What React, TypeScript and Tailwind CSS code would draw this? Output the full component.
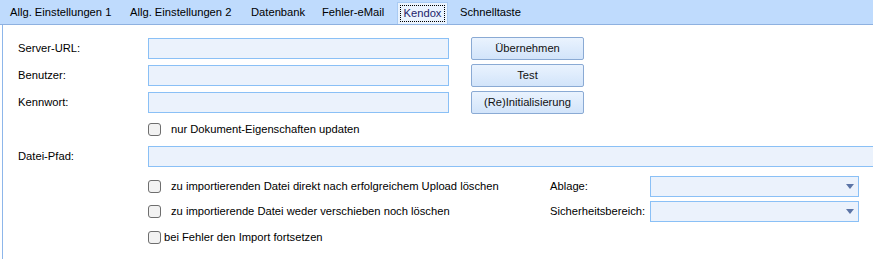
import React from "react";

const font = { fontFamily: '"Liberation Sans", Arial, sans-serif' };

function Tab({ label, w, active }: { label: string; w: number; active?: boolean }) {
  if (active) {
    return (
      <div className="h-[22px] mt-[2px] bg-[#eaf3fe] border border-b-0 border-[#a9cbf3] px-[2px] pt-[2px] box-border shrink-0" style={{ width: w }}>
        <div className="h-[17px] border border-dotted border-black flex items-center justify-center text-[#1d1d6b]">
          {label}
        </div>
      </div>
    );
  }
  return (
    <div className="h-[24px] flex items-center pl-[6px] shrink-0" style={{ width: w }}>
      {label}
    </div>
  );
}

function Input({ w }: { w: number }) {
  return <div className="h-[21px] bg-[#ebf2fc] border border-[#8ac0f6] shrink-0" style={{ width: w }} />;
}

function Btn({ label }: { label: string }) {
  return (
    <div className="ml-[22px] w-[113px] h-[23px] rounded-[2px] border border-[#8aaad4] bg-gradient-to-b from-[#eaf3fe] to-[#d2e4fa] flex items-center justify-center text-[#111] shrink-0">
      {label}
    </div>
  );
}

function Check() {
  return <div className="w-[13px] h-[13px] rounded-[3px] border border-[#6e6e6e] bg-[#f2f2f2] shrink-0" />;
}

function Select() {
  return (
    <div className="w-[209px] h-[21px] bg-[#ebf2fc] border border-[#8ac0f6] flex items-center justify-end pr-[4px] shrink-0">
      <svg width="8" height="5" viewBox="0 0 8 5">
        <polygon points="0,0 8,0 4,5" fill="#5b74a6" />
      </svg>
    </div>
  );
}

export default function App() {
  return (
    <div className="w-[873px] h-[259px] bg-white text-[11.2px] text-black overflow-hidden" style={font}>
      <div className="h-[24px] bg-[#bfdbfd] border-b border-[#8eb1e0] flex pl-[4px] box-content">
        <Tab label="Allg. Einstellungen 1" w={120} />
        <Tab label="Allg. Einstellungen 2" w={121} />
        <Tab label="Datenbank" w={71} />
        <Tab label="Fehler-eMail" w={80} />
        <div className="w-[1px] shrink-0" />
        <Tab label="Kendox" w={51} active />
        <div className="w-[6px] shrink-0" />
        <Tab label="Schnelltaste" w={90} />
      </div>
      <div className="ml-[2px] border-l border-[#8db6ea] h-[234px] pl-[15px] pt-[12px] flex flex-col">
        <div className="flex items-center h-[23px]">
          <div className="w-[130px] shrink-0">Server-URL:</div>
          <Input w={301} />
          <Btn label="Übernehmen" />
        </div>
        <div className="flex items-center h-[23px] mt-[4px]">
          <div className="w-[130px] shrink-0">Benutzer:</div>
          <Input w={301} />
          <Btn label="Test" />
        </div>
        <div className="flex items-center h-[23px] mt-[4px]">
          <div className="w-[130px] shrink-0">Kennwort:</div>
          <Input w={301} />
          <Btn label="(Re)Initialisierung" />
        </div>
        <div className="flex items-center h-[23px] mt-[4px]">
          <div className="w-[130px] shrink-0" />
          <Check />
          <div className="ml-[10px]">nur Dokument-Eigenschaften updaten</div>
        </div>
        <div className="flex items-center h-[23px] mt-[4px]">
          <div className="w-[130px] shrink-0">Datei-Pfad:</div>
          <Input w={740} />
        </div>
        <div className="flex items-center h-[23px] mt-[7px]">
          <div className="w-[130px] shrink-0" />
          <Check />
          <div className="ml-[10px] w-[379px] shrink-0">zu importierenden Datei direkt nach erfolgreichem Upload löschen</div>
          <div className="w-[100px] shrink-0">Ablage:</div>
          <Select />
        </div>
        <div className="flex items-center h-[23px] mt-[2px]">
          <div className="w-[130px] shrink-0" />
          <Check />
          <div className="ml-[10px] w-[379px] shrink-0">zu importierende Datei weder verschieben noch löschen</div>
          <div className="w-[100px] shrink-0">Sicherheitsbereich:</div>
          <Select />
        </div>
        <div className="flex items-center h-[23px] mt-[3px]">
          <div className="w-[130px] shrink-0" />
          <Check />
          <div className="ml-[3px]">bei Fehler den Import fortsetzen</div>
        </div>
      </div>
    </div>
  );
}
